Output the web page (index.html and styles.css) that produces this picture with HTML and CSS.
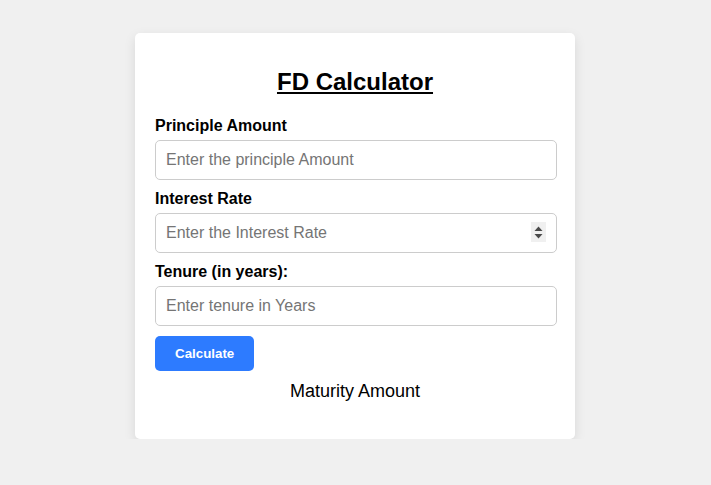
FILE: index.html
```html
<!DOCTYPE html>
<html lang="en">
<head>
<meta charset="UTF-8">
<title>FD Calculator</title>
<link rel="stylesheet" href="styles.css">
</head>
<body>
<div class="card">
  <h2 class="title">FD Calculator</h2>
  <label class="label" for="p">Principle Amount</label>
  <input class="field" id="p" type="text" placeholder="Enter the principle Amount">
  <label class="label" for="r">Interest Rate</label>
  <div class="num-wrap">
    <input class="field" id="r" type="text" inputmode="decimal" placeholder="Enter the Interest Rate">
    <span class="spin" aria-hidden="true">
      <svg width="15" height="20" viewBox="0 0 15 20">
        <path d="M7.5 4.5 L11.5 9 L3.5 9 Z" fill="#4a4a4a"/>
        <path d="M3.5 12 L11.5 12 L7.5 16.5 Z" fill="#4a4a4a"/>
      </svg>
    </span>
  </div>
  <label class="label" for="t">Tenure (in years):</label>
  <input class="field" id="t" type="text" placeholder="Enter tenure in Years">
  <button class="btn" type="button">Calculate</button>
  <p class="result">Maturity Amount</p>
</div>
</body>
</html>
```
FILE: styles.css
```css
html, body {
  margin: 0;
  padding: 0;
}
body {
  background: #f0f0f0;
  font-family: "Liberation Sans", Arial, sans-serif;
  padding: 33px 1px 0 0;
}
.card {
  width: 400px;
  margin: 0 auto;
  background: #fff;
  padding: 20px;
  border-radius: 5px;
  box-shadow: 0 4px 12px rgba(0, 0, 0, 0.1);
}
.title {
  font-size: 24px;
  font-weight: bold;
  text-align: center;
  text-decoration: underline;
  margin: 15px 0 21px;
  color: #000;
}
.label {
  display: block;
  font-size: 16px;
  font-weight: bold;
  margin-bottom: 5px;
  color: #000;
}
.field {
  display: block;
  width: calc(100% + 2px);
  box-sizing: border-box;
  height: 40px;
  padding: 10px;
  font-family: "Liberation Sans", Arial, sans-serif;
  font-size: 16px;
  border: 1px solid #ccc;
  border-radius: 5px;
  margin: 0 0 10px;
  color: #000;
}
.field::placeholder {
  color: #757575;
}
.num-wrap {
  position: relative;
}
.num-wrap .field {
  padding-right: 30px;
}
.spin {
  position: absolute;
  right: 9px;
  top: 9px;
  width: 15px;
  height: 20px;
  background: #f0f0f0;
  display: flex;
}
.btn {
  display: block;
  background: #2d7bff;
  color: #fff;
  border: none;
  border-radius: 5px;
  padding: 10px 20px;
  font-family: "Liberation Sans", Arial, sans-serif;
  font-size: 13.333px;
  font-weight: bold;
  cursor: pointer;
}
.result {
  text-align: center;
  font-size: 18px;
  margin: 10px 0 17px;
  color: #000;
}
```
